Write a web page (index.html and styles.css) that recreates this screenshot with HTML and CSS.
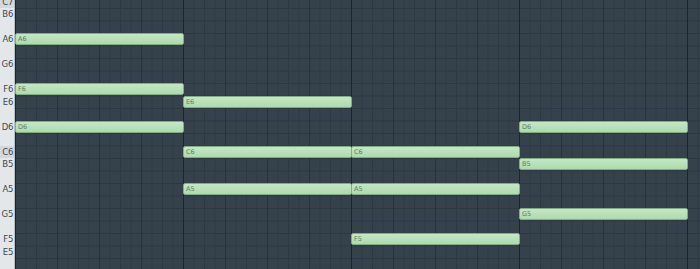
FILE: index.html
```html
<!DOCTYPE html>
<html lang="en">
  <head>
    <meta charset="UTF-8" />
    <title>Piano roll</title>
    <link rel="stylesheet" href="styles.css">
  </head>
  <body>
    <div id="roll">
      <div class="keys">
        <div class="key c">C7</div>
        <div class="key">B6</div>
        <div class="key black"></div>
        <div class="key">A6</div>
        <div class="key black"></div>
        <div class="key">G6</div>
        <div class="key black"></div>
        <div class="key">F6</div>
        <div class="key">E6</div>
        <div class="key black"></div>
        <div class="key">D6</div>
        <div class="key black"></div>
        <div class="key c">C6</div>
        <div class="key">B5</div>
        <div class="key black"></div>
        <div class="key">A5</div>
        <div class="key black"></div>
        <div class="key">G5</div>
        <div class="key black"></div>
        <div class="key">F5</div>
        <div class="key">E5</div>
        <div class="key black"></div>
      </div>

      <div class="grid">
        <!-- bar 1 -->
        <div class="note" style="left: 0px; top: 33px;">A6</div>
        <div class="note" style="left: 0px; top: 83px;">F6</div>
        <div class="note" style="left: 0px; top: 121px;">D6</div>
        <!-- bar 2 -->
        <div class="note" style="left: 168px; top: 96px;">E6</div>
        <div class="note" style="left: 168px; top: 146px;">C6</div>
        <div class="note" style="left: 168px; top: 183px;">A5</div>
        <!-- bar 3 -->
        <div class="note" style="left: 336px; top: 146px;">C6</div>
        <div class="note" style="left: 336px; top: 183px;">A5</div>
        <div class="note" style="left: 336px; top: 233px;">F5</div>
        <!-- bar 4 -->
        <div class="note" style="left: 504px; top: 121px;">D6</div>
        <div class="note" style="left: 504px; top: 158px;">B5</div>
        <div class="note" style="left: 504px; top: 208px;">G5</div>
      </div>
    </div>
  </body>
</html>
```

FILE: styles.css
```css
* {
  margin: 0;
  padding: 0;
}

body {
  background: #34414b;
  font-family: "DejaVu Sans", "Liberation Sans", sans-serif;
}

#roll {
  display: flex;
  width: 700px;
  height: 269px;
  overflow: hidden;
}

#roll .keys {
  flex: 0 0 14px;
  margin-top: -4.5px;
  background: #e3e7ea;
  border-right: 1px solid #b9c0c5;
}

#roll .key {
  height: 12.5px;
  line-height: 13px;
  font-size: 8.5px;
  color: #3d4852;
  text-align: right;
  padding-right: 1px;
  letter-spacing: -0.3px;
}

#roll .key.c {
  background: #d3d8dc;
}

#roll .grid {
  position: relative;
  flex: 1;
  height: 269px;
  background-color: #35424c;
  background-image:
    linear-gradient(to right, #1c252b 0, #1c252b 1px, transparent 1px),
    linear-gradient(to right, #27323a 0, #27323a 1px, transparent 1px),
    linear-gradient(to right, #2e3a43 0, #2e3a43 1px, transparent 1px),
    linear-gradient(to bottom, #2d3841 0, #2d3841 1px, transparent 1px);
  background-size: 168px 100%, 42px 100%, 10.5px 100%, 100% 12.5px;
  background-position: 168px 0, 0 0, 0 0, 0 8px;
}

#roll .note {
  position: absolute;
  width: 165px;
  height: 10px;
  background: linear-gradient(to bottom, #c4e7c4, #aedaae);
  border: 1px solid #83ac85;
  border-radius: 2px;
  font-size: 6.5px;
  line-height: 10px;
  color: #5f7f60;
  padding-left: 2px;
  box-sizing: content-box;
}
```
